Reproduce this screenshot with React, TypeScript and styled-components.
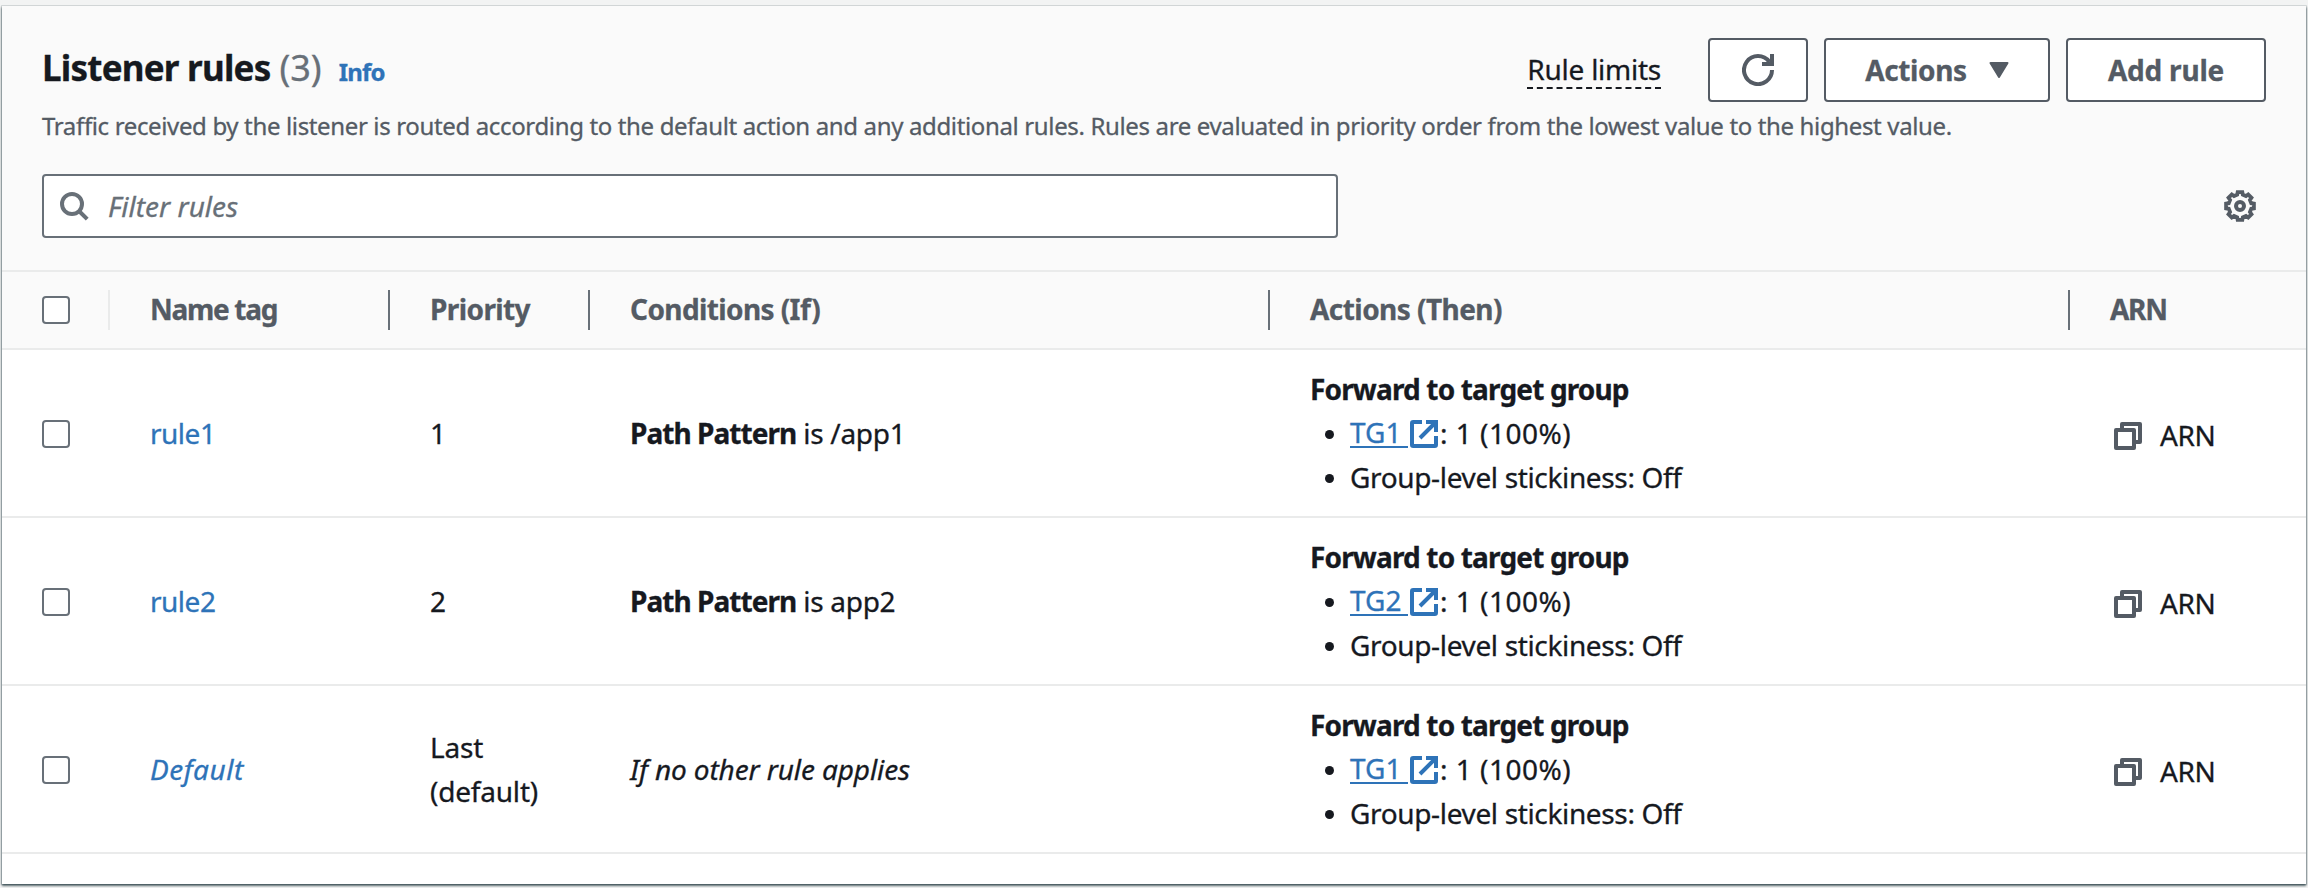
import React from 'react';
import styled, { createGlobalStyle } from 'styled-components';

const color = {
  text: '#16191f',
  muted: '#545b64',
  subtle: '#687078',
  link: '#2e73b8',
  divider: '#eaebeb',
  header: '#fafafa',
};

const GlobalStyle = createGlobalStyle`
  * { box-sizing: border-box; }
  body {
    margin: 0;
    background: #f2f3f3;
    color: ${color.text};
    font-family: 'Noto Sans', 'Open Sans', sans-serif;
    font-size: 28px;
    line-height: 44px;
  }
`;

const Page = styled.main`
  height: 888px;
  padding: 6px 2px 4px;
  overflow: hidden;
`;

const Panel = styled.section`
  height: 878px;
  background: #fff;
  box-shadow: 0 2px 2px 0 rgba(0, 28, 36, 0.5), 0 0 0 1px rgba(0, 28, 36, 0.1),
    1px 1px 2px 0 rgba(0, 28, 36, 0.25), -1px 1px 2px 0 rgba(0, 28, 36, 0.25);
`;

/* Letter spacing is tuned per label, in pixels. */
const Text = styled.span<{ $track?: number }>`
  letter-spacing: ${(p) => p.$track ?? 0}px;
  white-space: nowrap;
  -webkit-text-stroke: 0.3px currentColor;
`;

const Header = styled.header`
  height: 264px;
  padding: 32px 40px 0;
  background: ${color.header};
`;

const TitleBar = styled.div`
  display: flex;
  justify-content: space-between;
  height: 64px;
`;

const Heading = styled.div`
  display: flex;
  align-items: baseline;
  height: 60px;
  line-height: 60px;
`;

const Title = styled.h2`
  margin: 0;
  font-size: 35px;
  font-weight: 700;
`;

const Count = styled.span`
  margin-left: 9px;
  color: ${color.subtle};
  font-size: 36px;
`;

const InfoLink = styled.a`
  margin-left: 17px;
  color: ${color.link};
  font-size: 24px;
  font-weight: 700;
`;

const Toolbar = styled.div`
  display: flex;
  align-items: center;
  gap: 16px;
`;

const RuleLimits = styled.span`
  height: 38px;
  margin: 0 31px 0 0;
  border-bottom: 2px dashed ${color.text};
  line-height: 36px;
`;

const Button = styled.button<{ $width: number }>`
  display: flex;
  align-items: center;
  justify-content: center;
  gap: 22px;
  width: ${(p) => p.$width}px;
  height: 64px;
  padding: 0;
  border: 2px solid ${color.muted};
  border-radius: 4px;
  background: #fff;
  color: ${color.muted};
  font: 700 28px/44px 'Noto Sans', 'Open Sans', sans-serif;
`;

const Description = styled.p`
  margin: 8px 0 0;
  color: ${color.muted};
  font-size: 24px;
  line-height: 32px;
`;

const FilterBar = styled.div`
  display: flex;
  align-items: center;
  justify-content: space-between;
  margin-top: 32px;
  padding-right: 10px;
`;

const SearchBox = styled.div`
  display: flex;
  align-items: center;
  gap: 17px;
  width: 1296px;
  height: 64px;
  padding-left: 14px;
  border: 2px solid ${color.subtle};
  border-radius: 4px;
  background: #fff;
  color: ${color.subtle};
  font-style: italic;
`;

const Row = styled.div<{ $head?: boolean }>`
  display: grid;
  grid-template-columns: 108px 280px 200px 680px 800px 1fr;
  align-items: center;
  height: ${(p) => (p.$head ? 80 : 168)}px;
  background: ${(p) => (p.$head ? color.header : '#fff')};
  box-shadow: inset 0 -2px ${color.divider}${(p) => (p.$head ? `, inset 0 2px ${color.divider}` : '')};
`;

const CheckCell = styled.div`
  padding-left: 40px;
`;

const Cell = styled.div`
  padding: 0 0 2px 40px;
`;

const HeadCell = styled.div<{ $line?: string }>`
  height: 40px;
  padding-left: 40px;
  border-right: 2px solid ${(p) => p.$line ?? color.subtle};
  color: ${color.muted};
  font-weight: 700;
  line-height: 38px;
`;

const Checkbox = styled.span`
  display: block;
  width: 28px;
  height: 28px;
  border: 2px solid ${color.subtle};
  border-radius: 4px;
  background: #fff;
`;

const HeadCheckCell = styled(HeadCell)`
  display: flex;
  align-items: center;
`;

const RuleLink = styled.a<{ $italic?: boolean }>`
  color: ${color.link};
  font-style: ${(p) => (p.$italic ? 'italic' : 'normal')};
`;

const Bold = styled.strong`
  font-weight: 700;
`;

const Italic = styled.em`
  font-style: italic;
`;

const ActionList = styled.ul`
  margin: 0;
  padding: 0;
  list-style: none;
`;

const ActionItem = styled.li`
  display: flex;
  align-items: center;
  height: 44px;

  &::before {
    content: '';
    width: 9px;
    height: 9px;
    margin: 3px 16px 0 15px;
    border-radius: 50%;
    background: ${color.text};
  }
`;

const TargetLink = styled.a`
  display: flex;
  align-items: flex-end;
  height: 30px;
  color: ${color.link};
`;

const TargetName = styled.span`
  width: 58px;
  height: 38px;
  margin-right: 2px;
  border-bottom: 2px solid ${color.link};
  line-height: 44px;
`;

const Weight = styled.span`
  margin-left: 2px;
`;

const ArnCell = styled.div`
  display: flex;
  align-items: center;
  gap: 18px;
  padding: 4px 0 0 44px;
`;

const ArnText = styled.span`
  padding-bottom: 2px;
`;

const RefreshIcon = () => (
  <svg width="32" height="32" viewBox="0 0 32 32" fill="none">
    <path d="M30 16A14 14 0 1 1 27.3 7.8" stroke={color.muted} strokeWidth="4" />
    <path d="M28 0h4v12H20V8h4.5L28 7z" fill={color.muted} />
  </svg>
);

const CaretIcon = () => (
  <svg width="20" height="16" viewBox="0 0 20 16">
    <path d="M1.5 1h17L10 15z" fill={color.muted} stroke={color.muted} strokeWidth="2" strokeLinejoin="round" />
  </svg>
);

const SearchIcon = () => (
  <svg width="33" height="32" viewBox="0 0 33 32" fill="none" stroke={color.subtle} strokeWidth="4">
    <circle cx="14" cy="14" r="10" />
    <path d="M21 21l8.2 8.2" />
  </svg>
);

/* Eight teeth: each one is two points on the outer radius between two on the inner one. */
const gearPoints = Array.from({ length: 8 }, (_, i) =>
  [
    [-14, 11.6],
    [-9.5, 14.1],
    [9.5, 14.1],
    [14, 11.6],
  ].map(([offset, radius]) => {
    const angle = ((i * 45 + offset) * Math.PI) / 180;
    return `${(16 + radius * Math.sin(angle)).toFixed(2)},${(16 - radius * Math.cos(angle)).toFixed(2)}`;
  }),
)
  .flat()
  .join(' ');

const GearIcon = () => (
  <svg width="32" height="32" viewBox="0 0 32 32" fill="none" stroke={color.muted}>
    <polygon points={gearPoints} strokeWidth="3.8" strokeLinejoin="miter" />
    <circle cx="16" cy="16" r="4" strokeWidth="4" />
  </svg>
);

const ExternalIcon = () => (
  <svg width="28" height="28" viewBox="0 0 28 28" fill="none" stroke={color.link} strokeWidth="4">
    <path d="M12 2H3.2Q2 2 2 3.2V24.8Q2 26 3.2 26H24.8Q26 26 26 24.8V16" />
    <path d="M16 2h10v10M25.5 2.5L10 18" />
  </svg>
);

const CopyIcon = () => (
  <svg width="28" height="28" viewBox="0 0 28 28" fill="none" stroke={color.muted} strokeWidth="4" strokeLinejoin="round">
    <path d="M2 8h18v18H2z" />
    <path d="M8 8V2h18v18h-6" />
  </svg>
);

type Rule = {
  name: string;
  isDefault?: boolean;
  priority: string[];
  path?: string;
  target: string;
};

const rules: Rule[] = [
  { name: 'rule1', priority: ['1'], path: '/app1', target: 'TG1' },
  { name: 'rule2', priority: ['2'], path: 'app2', target: 'TG2' },
  { name: 'Default', isDefault: true, priority: ['Last', '(default)'], target: 'TG1' },
];

const RuleRow = ({ rule }: { rule: Rule }) => (
  <Row>
    <CheckCell>
      <Checkbox />
    </CheckCell>
    <Cell>
      <RuleLink $italic={rule.isDefault}>
        <Text $track={rule.isDefault ? 0.5 : -0.5}>{rule.name}</Text>
      </RuleLink>
    </Cell>
    <Cell>
      {rule.priority.map((line) => (
        <div key={line}>
          <Text $track={-0.2}>{line}</Text>
        </div>
      ))}
    </Cell>
    <Cell>
      {rule.path ? (
        <>
          <Bold>
            <Text $track={-0.95}>Path Pattern</Text>
          </Bold>
          <Text $track={-0.3}> is {rule.path}</Text>
        </>
      ) : (
        <Italic>
          <Text $track={-0.12}>If no other rule applies</Text>
        </Italic>
      )}
    </Cell>
    <Cell>
      <Bold>
        <Text $track={-0.84}>Forward to target group</Text>
      </Bold>
      <ActionList>
        <ActionItem>
          <TargetLink>
            <TargetName>
              <Text>{rule.target}</Text>
            </TargetName>
            <ExternalIcon />
          </TargetLink>
          <Weight>
            <Text $track={0.5}>: 1 (100%)</Text>
          </Weight>
        </ActionItem>
        <ActionItem>
          <Text $track={-0.35}>Group-level stickiness: Off</Text>
        </ActionItem>
      </ActionList>
    </Cell>
    <ArnCell>
      <CopyIcon />
      <ArnText>
        <Text $track={-0.4}>ARN</Text>
      </ArnText>
    </ArnCell>
  </Row>
);

export default function App() {
  return (
    <>
      <GlobalStyle />
      <Page>
        <Panel>
          <Header>
            <TitleBar>
              <Heading>
                <Title>
                  <Text $track={-0.78}>Listener rules</Text>
                </Title>
                <Count>
                  <Text>(3)</Text>
                </Count>
                <InfoLink>
                  <Text $track={-0.8}>Info</Text>
                </InfoLink>
              </Heading>
              <Toolbar>
                <RuleLimits>
                  <Text $track={-0.25}>Rule limits</Text>
                </RuleLimits>
                <Button $width={100} aria-label="Refresh">
                  <RefreshIcon />
                </Button>
                <Button $width={226}>
                  <Text $track={-0.4}>Actions</Text>
                  <CaretIcon />
                </Button>
                <Button $width={200}>
                  <Text $track={-0.2}>Add rule</Text>
                </Button>
              </Toolbar>
            </TitleBar>
            <Description>
              <Text $track={-0.355}>
                Traffic received by the listener is routed according to the default action and any additional rules.
                Rules are evaluated in priority order from the lowest value to the highest value.
              </Text>
            </Description>
            <FilterBar>
              <SearchBox>
                <SearchIcon />
                <Text $track={0}>Filter rules</Text>
              </SearchBox>
              <GearIcon />
            </FilterBar>
          </Header>
          <Row $head>
            <HeadCheckCell $line={color.divider}>
              <Checkbox />
            </HeadCheckCell>
            <HeadCell>
              <Text $track={-1.3}>Name tag</Text>
            </HeadCell>
            <HeadCell>
              <Text $track={-0.6}>Priority</Text>
            </HeadCell>
            <HeadCell>
              <Text $track={-0.6}>Conditions (If)</Text>
            </HeadCell>
            <HeadCell>
              <Text $track={-0.55}>Actions (Then)</Text>
            </HeadCell>
            <HeadCell $line="transparent">
              <Text $track={-1.3}>ARN</Text>
            </HeadCell>
          </Row>
          {rules.map((rule) => (
            <RuleRow key={rule.name} rule={rule} />
          ))}
        </Panel>
      </Page>
    </>
  );
}
